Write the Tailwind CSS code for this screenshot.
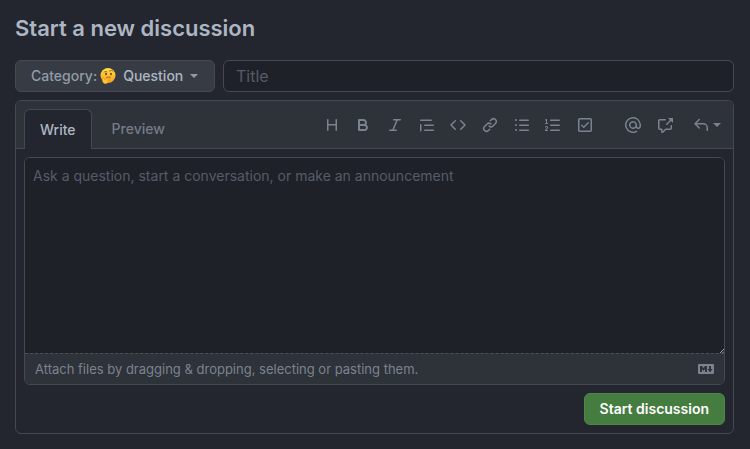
<!DOCTYPE html>
<html lang="en">
<head>
<meta charset="utf-8">
<meta name="viewport" content="width=device-width, initial-scale=1">
<title>Start a new discussion</title>
<script src="https://cdn.jsdelivr.net/npm/@tailwindcss/browser@4"></script>
</head>
<body class="min-h-screen bg-[#23262e] font-['Inter','Liberation_Sans',sans-serif] text-sm text-[#adb6c3]">
<main class="px-4 pt-3 pb-4 pl-[15px]">
  <h1 class="text-[22px] leading-8 font-semibold">Start a new discussion</h1>
  <form>
    <div class="mt-4 flex gap-2">
      <button type="button" class="flex h-8 w-[200px] shrink-0 items-center rounded-md border border-[#444a53] bg-[#373c44] pl-[15px] font-medium whitespace-nowrap">
        <span class="text-[#929ba8]">Category:</span>
        <svg class="ml-[3px] size-4 shrink-0" viewBox="0 0 32 32" aria-hidden="true">
          <defs><linearGradient id="face" x1="0" y1="0" x2="0" y2="1"><stop offset="0" stop-color="#ffe04a"/><stop offset="1" stop-color="#f6a11b"/></linearGradient></defs>
          <circle cx="16" cy="15" r="15" fill="url(#face)"/>
          <ellipse cx="12" cy="12" rx="1.8" ry="2.6" fill="#6b4012"/><ellipse cx="22" cy="12" rx="1.8" ry="2.6" fill="#6b4012"/>
          <path d="M8 8q3-2 6-.5M19 6q4-2.500 7 0M13 19q4-2 8-.5" fill="none" stroke="#8a5216" stroke-width="1.500" stroke-linecap="round"/>
          <path d="M6 20c2-1 3 1 3 3l9-3c2 0 2 2 0 3l-3 1c3 0 3 3 1 4-1 3-4 4-7 3-4-1-5-6-3-11z" fill="#ffc632" stroke="#e08a1a"/>
        </svg>
        <span class="ml-[7px]">Question</span>
        <span class="ml-[7px] border-x-4 border-t-4 border-x-transparent border-t-[#929ba8]"></span>
      </button>
      <input type="text" aria-label="Title" placeholder="Title" class="h-8 min-w-0 flex-1 rounded-md border border-[#444851] bg-[#1e2128] px-3 text-base placeholder:text-[#565c66]">
    </div>

    <section class="mt-2 rounded-md border border-[#444851]">
      <div class="flex h-12 items-end justify-between rounded-t-md border-b border-[#444851] bg-[#2e3239] pl-2">
        <div role="tablist" class="-mb-px flex h-10 font-medium">
          <button type="button" role="tab" aria-selected="true" class="rounded-t-md border border-b-0 border-[#444851] bg-[#23262e] px-[15px]">Write</button>
          <button type="button" role="tab" aria-selected="false" class="px-5 text-[#747c88]">Preview</button>
        </div>
        <div role="toolbar" aria-label="Formatting" class="flex h-full items-center pr-3 text-[#7b838f]">
          <div class="grid w-[285px] grid-cols-9 justify-items-center">
            <button type="button" aria-label="Heading"><svg class="size-4 fill-current" viewBox="0 0 16 16"><path d="M3.75 2a.75.75 0 01.75.75V7h7V2.75a.75.75 0 011.5 0v10.5a.75.75 0 01-1.5 0V8.5h-7v4.75a.75.75 0 01-1.5 0V2.75A.75.75 0 013.75 2z"/></svg></button>
            <button type="button" aria-label="Bold"><svg class="size-4 fill-current" viewBox="0 0 16 16"><path fill-rule="evenodd" d="M4 2a1 1 0 00-1 1v10a1 1 0 001 1h5.5a3.5 3.5 0 001.852-6.47A3.5 3.5 0 008.5 2H4zm4.5 5a1.5 1.5 0 100-3H5v3h3.5zM5 9v3h4.5a1.5 1.5 0 000-3H5z"/></svg></button>
            <button type="button" aria-label="Italic"><svg class="size-4 fill-current" viewBox="0 0 16 16"><path d="M6 2.75A.75.75 0 016.75 2h6.5a.75.75 0 010 1.5h-2.505l-3.858 9H9.25a.75.75 0 010 1.5h-6.5a.75.75 0 010-1.5h2.505l3.858-9H6.75A.75.75 0 016 2.75z"/></svg></button>
            <button type="button" aria-label="Quote"><svg class="size-4 fill-current" viewBox="0 0 16 16"><path d="M1.75 2.5a.75.75 0 000 1.5h10.5a.75.75 0 000-1.5H1.75zm4 5a.75.75 0 000 1.5h8.5a.75.75 0 000-1.5h-8.5zm0 5a.75.75 0 000 1.5h8.5a.75.75 0 000-1.5h-8.5zM2.5 7.75a.75.75 0 00-1.5 0v6a.75.75 0 001.5 0v-6z"/></svg></button>
            <button type="button" aria-label="Code"><svg class="size-4 fill-current" viewBox="0 0 16 16"><path d="M4.72 3.22a.75.75 0 011.06 1.06L2.06 8l3.72 3.72a.75.75 0 11-1.06 1.06L.47 8.53a.75.75 0 010-1.06l4.25-4.25zm6.56 0a.75.75 0 10-1.06 1.06L13.94 8l-3.72 3.72a.75.75 0 101.06 1.06l4.25-4.25a.75.75 0 000-1.06l-4.25-4.25z"/></svg></button>
            <button type="button" aria-label="Link"><svg class="size-4 fill-current" viewBox="0 0 16 16"><path d="M7.775 3.275a.75.75 0 001.06 1.06l1.25-1.25a2 2 0 112.83 2.83l-2.5 2.5a2 2 0 01-2.83 0 .75.75 0 00-1.06 1.06 3.5 3.5 0 004.95 0l2.5-2.5a3.5 3.5 0 00-4.95-4.95l-1.25 1.25zm-4.69 9.64a2 2 0 010-2.83l2.5-2.5a2 2 0 012.83 0 .75.75 0 001.06-1.06 3.5 3.5 0 00-4.95 0l-2.5 2.5a3.5 3.5 0 004.95 4.95l1.25-1.25a.75.75 0 00-1.06-1.06l-1.25 1.25a2 2 0 01-2.83 0z"/></svg></button>
            <button type="button" aria-label="Bulleted list"><svg class="size-4 fill-current" viewBox="0 0 16 16"><path d="M2 4a1 1 0 100-2 1 1 0 000 2zm3.75-1.5a.75.75 0 000 1.5h8.5a.75.75 0 000-1.5h-8.5zm0 5a.75.75 0 000 1.5h8.5a.75.75 0 000-1.5h-8.5zm0 5a.75.75 0 000 1.5h8.5a.75.75 0 000-1.5h-8.5zM3 8a1 1 0 11-2 0 1 1 0 012 0zm-1 6a1 1 0 100-2 1 1 0 000 2z"/></svg></button>
            <button type="button" aria-label="Numbered list"><svg class="size-4 fill-current" viewBox="0 0 16 16"><path d="M2.003 2.5a.5.5 0 00-.723-.447l-1.003.5a.5.5 0 00.446.895l.28-.14V6H.5a.5.5 0 000 1h2.006a.5.5 0 100-1h-.503V2.5zM5 3.25a.75.75 0 01.75-.75h8.5a.75.75 0 010 1.5h-8.5A.75.75 0 015 3.25zm0 5a.75.75 0 01.75-.75h8.5a.75.75 0 010 1.5h-8.5A.75.75 0 015 8.25zm0 5a.75.75 0 01.75-.75h8.5a.75.75 0 010 1.5h-8.5a.75.75 0 01-.75-.75zM.924 10.32l.003-.004a.851.851 0 01.144-.153A.66.66 0 011.5 10c.195 0 .306.068.374.146a.57.57 0 01.128.376c0 .453-.269.682-.8 1.078l-.035.025C.692 11.98 0 12.495 0 13.5a.5.5 0 00.5.5h2.003a.5.5 0 000-1H1.146c.132-.197.351-.372.654-.597l.047-.035c.47-.35 1.156-.858 1.156-1.845 0-.365-.118-.744-.377-1.038-.268-.303-.658-.484-1.126-.484-.48 0-.84.202-1.068.392a1.858 1.858 0 00-.348.384l-.007.011-.002.004-.001.002-.001.001a.5.5 0 00.851.525z"/></svg></button>
            <button type="button" aria-label="Task list"><svg class="size-4 fill-current" viewBox="0 0 16 16"><path fill-rule="evenodd" d="M2.5 2.75a.25.25 0 01.25-.25h10.5a.25.25 0 01.25.25v10.5a.25.25 0 01-.25.25H2.75a.25.25 0 01-.25-.25V2.75zM2.75 1A1.75 1.75 0 001 2.75v10.5c0 .966.784 1.75 1.75 1.75h10.5A1.75 1.75 0 0015 13.25V2.75A1.75 1.75 0 0013.25 1H2.75zm9.03 5.28a.75.75 0 00-1.06-1.06L6.75 9.19 5.28 7.72a.75.75 0 00-1.06 1.06l2 2a.75.75 0 001.06 0l4.5-4.5z"/></svg></button>
          </div>
          <button type="button" aria-label="Mention" class="ml-6"><svg class="size-4 fill-current" viewBox="0 0 16 16"><path fill-rule="evenodd" d="M4.75 2.37a6.5 6.5 0 006.5 11.26.75.75 0 01.75 1.298 8 8 0 113.994-7.273.754.754 0 01.006.095v1.5a2.75 2.75 0 01-5.072 1.475A4 4 0 1112 8v1.25a1.25 1.25 0 002.5 0V7.867a6.5 6.5 0 00-9.75-5.496V2.37zM10.5 8a2.5 2.5 0 10-5 0 2.5 2.5 0 005 0z"/></svg></button>
          <button type="button" aria-label="Reference" class="ml-4"><svg class="size-4 fill-current" viewBox="0 0 16 16"><path d="M16 1.25v4.146a.25.25 0 01-.427.177L14.03 4.03l-3.75 3.75a.75.75 0 11-1.06-1.06l3.75-3.75-1.543-1.543A.25.25 0 0111.604 1h4.146a.25.25 0 01.25.25zM2.75 3.5a.25.25 0 00-.25.25v7.5c0 .138.112.25.25.25h2a.75.75 0 01.75.75v2.19l2.72-2.72a.75.75 0 01.53-.22h4.5a.25.25 0 00.25-.25v-2.5a.75.75 0 111.5 0v2.5A1.75 1.75 0 0113.25 13H9.06l-2.573 2.573A1.457 1.457 0 014 14.543V13H2.75A1.75 1.75 0 011 11.25v-7.5C1 2.784 1.784 2 2.75 2h5.5a.75.75 0 010 1.5h-5.5z"/></svg></button>
          <button type="button" aria-label="Saved replies" class="ml-5 flex items-center gap-1"><svg class="size-4 fill-current" viewBox="0 0 16 16"><path d="M6.78 1.97a.75.75 0 010 1.06L3.81 6h6.44A4.75 4.75 0 0115 10.75v2.5a.75.75 0 01-1.5 0v-2.5a3.25 3.25 0 00-3.25-3.25H3.81l2.97 2.97a.75.75 0 11-1.06 1.06L1.47 7.28a.75.75 0 010-1.06l4.25-4.25a.75.75 0 011.06 0z"/></svg><span class="border-x-4 border-t-4 border-x-transparent border-t-current"></span></button>
        </div>
      </div>

      <div class="p-2">
        <div class="relative overflow-hidden rounded-md border border-[#444851]">
          <textarea aria-label="Comment body" placeholder="Ask a question, start a conversation, or make an announcement" class="block h-[195px] w-full resize-none bg-[#1e2128] p-2 leading-5 placeholder:text-[#565c66]"></textarea>
          <svg class="absolute right-0 bottom-[31px] size-1" viewBox="0 0 4 4" aria-hidden="true"><path d="M0 4L4 0M2.500 4L4 2.500" stroke="#c4c8cd" stroke-width=".8"/></svg>
          <label class="flex h-[31px] items-center justify-between border-t border-dashed border-[#4a4f58] bg-[#2e3239] px-[10px] text-[13px] text-[#7b838f]">
            <span>Attach files by dragging &amp; dropping, selecting or pasting them.</span>
            <input type="file" multiple class="hidden">
            <svg class="size-4 fill-current" viewBox="0 0 16 16" aria-hidden="true"><path fill-rule="evenodd" d="M14.85 3H1.15C.52 3 0 3.52 0 4.15v7.69C0 12.48.52 13 1.15 13h13.69c.64 0 1.15-.52 1.15-1.15v-7.7C16 3.52 15.48 3 14.85 3zM9 11H7V8L5.5 9.92 4 8v3H2V5h2l1.5 2L7 5h2v6zm2.99.5L9.5 8H11V5h2v3h1.5l-2.51 3.5z"/></svg>
          </label>
        </div>
        <div class="mt-2 flex justify-end">
          <button type="submit" class="h-8 rounded-md border border-[#53844f] bg-[#457c40] px-[15px] font-semibold text-white">Start discussion</button>
        </div>
      </div>
    </section>
  </form>
</main>
</body>
</html>
